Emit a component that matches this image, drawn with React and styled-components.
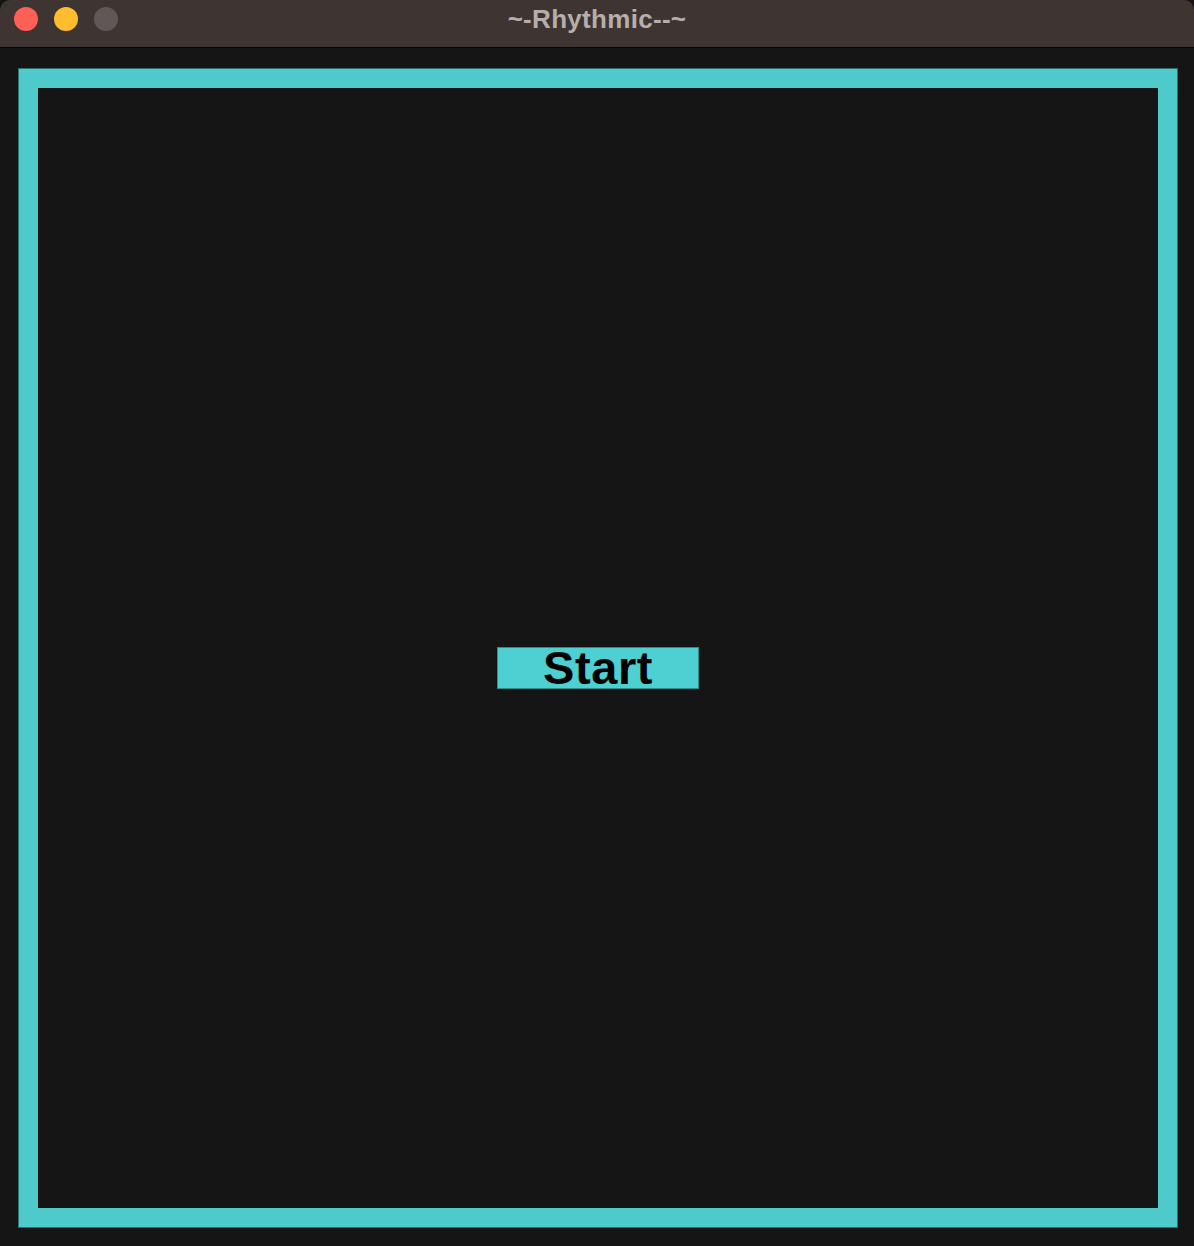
import React from 'react'
import styled, { createGlobalStyle } from 'styled-components'

const GlobalStyle = createGlobalStyle`
  html, body {
    margin: 0;
    padding: 0;
    background: #151515;
  }
  body {
    font-family: "Liberation Sans", Arial, sans-serif;
  }
`

const Window = styled.div`
  width: 1194px;
  height: 1246px;
  box-sizing: border-box;
  display: flex;
  flex-direction: column;
  background: #151515;
  border-radius: 10px;
  overflow: hidden;
`

const TitleBar = styled.div`
  height: 47px;
  flex: none;
  position: relative;
  display: flex;
  align-items: center;
  justify-content: center;
  background: #3e3533;
  border-bottom: 1px solid #050505;
`

const Lights = styled.div`
  position: absolute;
  left: 14px;
  top: 7px;
  display: flex;
  gap: 16px;
`

const Light = styled.span`
  width: 24px;
  height: 24px;
  border-radius: 50%;
  background: ${p => p.color};
`

const Title = styled.h1`
  margin: 0;
  font-size: 26px;
  font-weight: 700;
  color: #b5aeab;
  letter-spacing: 0.3px;
  line-height: 1;
  transform: translateY(-5px);
`

const Content = styled.div`
  flex: 1;
  padding: 20px 16px 18px 18px;
  box-sizing: border-box;
`

const Frame = styled.div`
  width: 1160px;
  height: 1160px;
  box-sizing: border-box;
  border: 20px solid #4ecacb;
  outline: 1px solid #2e6f70;
  outline-offset: -1px;
  background: #151515;
  display: flex;
  justify-content: center;
  padding-top: 560px;
`

const StartButton = styled.button`
  width: 200px;
  height: 40px;
  margin: 0;
  padding: 0;
  border: none;
  outline: 1px solid #2e8c8d;
  background: #4ecfd2;
  color: #000;
  font-family: "Liberation Sans", Arial, sans-serif;
  font-weight: 700;
  font-size: 47px;
  letter-spacing: 0.6px;
  line-height: 40px;
  cursor: pointer;
`

export default function App() {
  return (
    <>
      <GlobalStyle />
      <Window>
        <TitleBar>
          <Lights>
            <Light color="#fe5f57" />
            <Light color="#febc2e" />
            <Light color="#615756" />
          </Lights>
          <Title>~-Rhythmic--~</Title>
        </TitleBar>
        <Content>
          <Frame>
            <StartButton>Start</StartButton>
          </Frame>
        </Content>
      </Window>
    </>
  )
}
